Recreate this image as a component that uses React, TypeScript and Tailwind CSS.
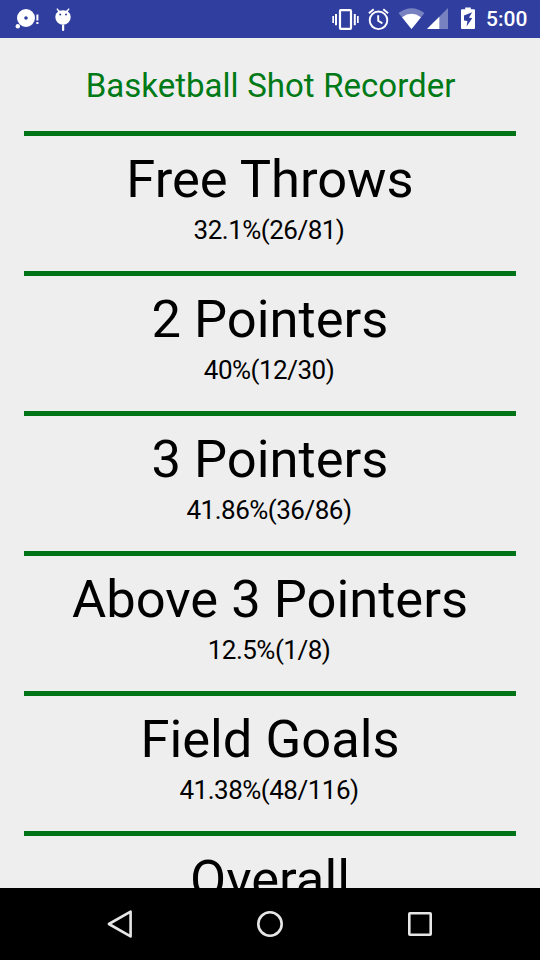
interface Stat {
  label: string
  value: string
}

const stats: Stat[] = [
  { label: 'Free Throws', value: '32.1%(26/81)' },
  { label: '2 Pointers', value: '40%(12/30)' },
  { label: '3 Pointers', value: '41.86%(36/86)' },
  { label: 'Above 3 Pointers', value: '12.5%(1/8)' },
  { label: 'Field Goals', value: '41.38%(48/116)' },
  { label: 'Overall', value: '' },
]

function StatusBar() {
  return (
    <div className="flex h-[38px] shrink-0 items-center justify-between bg-[#303f9f] text-white">
      {/* notifications */}
      <svg width="100" height="38" viewBox="0 0 100 38" fill="currentColor">
        <path fillRule="evenodd" d="M26 9a9 9 0 1 0 0 18a9 9 0 0 0 0-18zM26 16.2a1.8 1.8 0 1 1 0 3.6a1.8 1.8 0 0 1 0-3.6z" />
        <circle cx="17.8" cy="26.2" r="2.2" />
        <rect x="36.4" y="14.5" width="2" height="6" />
        <rect x="36.4" y="22" width="2" height="2" />
        <path fillRule="evenodd" d="M57.2 8.2l2.6 2.6q3.2-1 6.4 0l2.6-2.6.8.8-1.7 2.6q2.8 2 2.8 5.4a7.7 7.7 0 0 1-15.4 0q0-3.4 2.8-5.4l-1.7-2.6zM60.2 13.6a1 1 0 1 0 0 2a1 1 0 0 0 0-2zM66 13.6a1 1 0 1 0 0 2a1 1 0 0 0 0-2z" />
        <rect x="62" y="24.5" width="2.2" height="6.5" rx="1" />
      </svg>

      {/* system icons + clock */}
      <div className="flex items-center">
        <svg width="154" height="38" viewBox="328 0 154 38" fill="currentColor">
          <path d="M332.3 16h1.7v7h-1.7zM335 14h2v11.3h-2zM353.8 14h2v11.3h-2zM357 16h1.7v7H357z" />
          <rect x="340" y="10.2" width="11" height="18.6" rx="0.8" fill="none" stroke="currentColor" strokeWidth="2.2" />
          <g fill="none" stroke="currentColor" strokeWidth="1.9">
            <circle cx="378.5" cy="20.3" r="8.8" />
            <path d="M378.2 15.2v5.6l4.2 2.6M368.9 13.3l4.8-4M388.1 13.3l-4.8-4" />
          </g>
          <path d="M398.5 13Q411.5 3.5 424.5 13L411.5 29z" opacity="0.35" />
          <path d="M402 17.2Q411.5 10.4 421 17.2L411.5 29z" />
          <path d="M448 8v21h-21z" opacity="0.35" />
          <path d="M439.3 16.7V29H427z" />
          <path fillRule="evenodd" d="M465.2 7.5h5.6v1.7h3.2q1 0 1 1V28q0 1-1 1h-12q-1 0-1-1V10.2q0-1 1-1h3.2zM472.2 12.2L464 15.4V20.6l3.4.4-.8 5.4 5.6-8.2-3.2-.6z" />
        </svg>
        <span className="w-[58px] pl-[4px] text-[21px] leading-[38px] font-medium">5:00</span>
      </div>
    </div>
  )
}

function StatRow({ label, value }: Stat) {
  return (
    <div className="h-[140px] shrink-0 border-t-[5px] border-[#007316] pt-[12px] text-center text-black">
      <h2 className="text-[52.5px] leading-[62px]">{label}</h2>
      {value && <p className="mt-[4px] pr-[2px] text-[26px] leading-[32px] tracking-[-0.5px]">{value}</p>}
    </div>
  )
}

function NavBar() {
  return (
    <div className="flex h-[72px] shrink-0 items-center justify-center gap-[114px] bg-black text-[#e6e6e6]">
      <svg width="36" height="36" viewBox="0 0 36 36" fill="none" stroke="currentColor" strokeWidth="2.6" strokeLinejoin="round">
        <path d="M6.9 18L28.6 5.6v24.8z" />
      </svg>
      <svg width="36" height="36" viewBox="0 0 36 36" fill="none" stroke="currentColor" strokeWidth="2.6">
        <circle cx="18" cy="18" r="11.7" />
      </svg>
      <svg width="36" height="36" viewBox="0 0 36 36" fill="none" stroke="currentColor" strokeWidth="2.6">
        <rect x="7.3" y="7.3" width="21.4" height="21.4" rx="0.6" />
      </svg>
    </div>
  )
}

export default function App() {
  return (
    <div className="flex h-screen flex-col overflow-hidden bg-[#eeeeee] font-[Roboto,sans-serif]">
      <StatusBar />
      <main className="flex min-h-0 flex-1 flex-col overflow-hidden px-6">
        <h1 className="h-[93px] shrink-0 pt-[28px] pl-[1px] text-center text-[33px] leading-[39px] text-[#007a16] [word-spacing:0.5px]">
          Basketball Shot Recorder
        </h1>
        {stats.map((stat) => (
          <StatRow key={stat.label} label={stat.label} value={stat.value} />
        ))}
      </main>
      <NavBar />
    </div>
  )
}
